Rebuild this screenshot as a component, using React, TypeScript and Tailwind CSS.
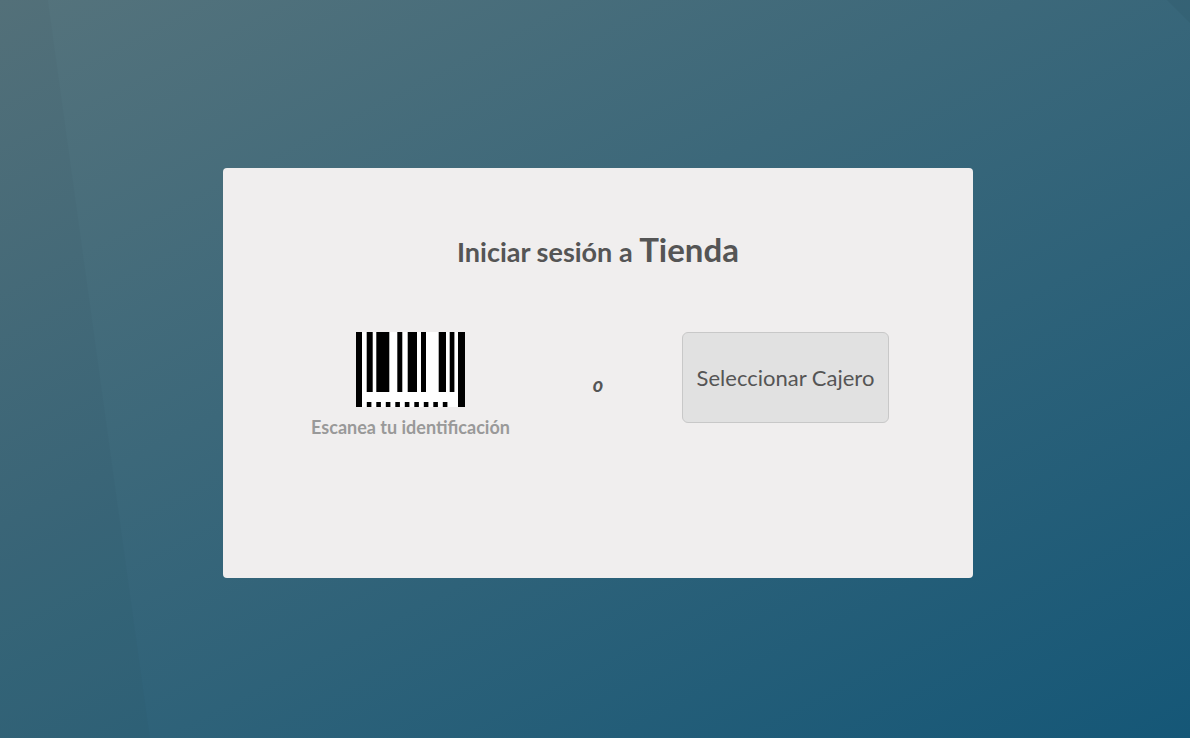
type Bar = { x: number; width: number; height: number };

const BARS: Bar[] = [
  { x: 0, width: 6, height: 75 },
  { x: 10.7, width: 6, height: 60 },
  { x: 20.3, width: 13, height: 60 },
  { x: 41.3, width: 5, height: 60 },
  { x: 51.7, width: 9.3, height: 60 },
  { x: 65, width: 5, height: 60 },
  { x: 82.7, width: 7.3, height: 60 },
  { x: 93.7, width: 4.7, height: 60 },
  { x: 102, width: 7, height: 75 },
];

function Backdrop() {
  return (
    <svg
      aria-hidden="true"
      className="absolute inset-0 h-full w-full"
      viewBox="0 0 1190 738"
      preserveAspectRatio="none"
    >
      <path d="M0 0H48L150 738H0Z" fill="#000" fillOpacity="0.018" />
      <path d="M1167 0H1190V23Z" fill="#000" fillOpacity="0.04" />
    </svg>
  );
}

function Barcode() {
  return (
    <svg aria-hidden="true" className="block" width="109" height="75" viewBox="0 0 109 75">
      <rect width="109" height="75" fill="#fff" />
      {BARS.map((bar) => (
        <rect key={bar.x} x={bar.x} y="0" width={bar.width} height={bar.height} />
      ))}
      {Array.from({ length: 9 }, (_, i) => (
        <rect key={i} x={10.8 + i * 9.5} y="70" width="4.6" height="5" />
      ))}
    </svg>
  );
}

export default function App() {
  return (
    <div className="relative flex min-h-screen items-center justify-center bg-[linear-gradient(153deg,#55737c,#155777)] pt-2 pl-1.5 font-['Lato',sans-serif] text-[#555555]">
      <Backdrop />
      <main className="relative w-full max-w-[750px] rounded bg-[#f0eeee] px-16 pt-[61px] pb-[139px]">
        <h1 className="text-center text-[27px] leading-10 font-bold">
          Iniciar sesión a <span className="text-[33px]">Tienda</span>
        </h1>
        <div className="mt-15 grid grid-cols-[247px_1fr_247px] items-start">
          <section className="flex flex-col items-center">
            <Barcode />
            <p className="mt-2 text-[18px] leading-6 font-bold text-[#999999]">
              Escanea tu identificación
            </p>
          </section>
          <p className="pt-10 text-center text-[20px] leading-6 font-bold italic">o</p>
          <section className="flex justify-center">
            <button
              type="button"
              className="h-[91px] cursor-pointer rounded-md border border-[#c8c8c8] bg-[#e1e1e1] px-3.5 text-[22px]"
            >
              Seleccionar Cajero
            </button>
          </section>
        </div>
      </main>
    </div>
  );
}
